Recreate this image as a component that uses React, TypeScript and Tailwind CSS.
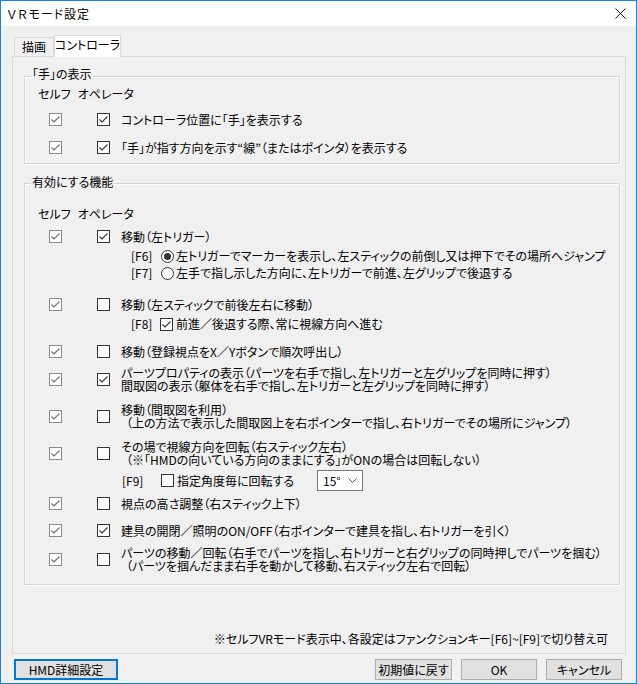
import React from 'react';

const Check: React.FC<{ checked?: boolean; dim?: boolean }> = ({ checked, dim }) => (
  <span
    className={
      'flex h-[13px] w-[13px] shrink-0 items-center justify-center border bg-white ' +
      (dim ? 'border-[#8c8c8c]' : 'border-[#333333]')
    }
  >
    {checked && (
      <svg width="11" height="11" viewBox="0 0 11 11">
        <polyline
          points="1.5,5.5 4,8 9.5,2.5"
          fill="none"
          stroke={dim ? '#6e6e6e' : '#333333'}
          strokeWidth="1.1"
        />
      </svg>
    )}
  </span>
);

const Radio: React.FC<{ on?: boolean }> = ({ on }) => (
  <span className="flex h-[13px] w-[13px] shrink-0 items-center justify-center rounded-full border border-[#333333] bg-white">
    {on && <span className="h-[7px] w-[7px] rounded-full bg-[#333333]" />}
  </span>
);

// one feature row: self + operator checkbox, then text (1 or 2 lines)
const Feature: React.FC<{ self: boolean; op: boolean; lines: string[]; className: string }> = ({
  self,
  op,
  lines,
  className,
}) => (
  <div className={'flex items-center ' + className}>
    <span className="ml-[24px]">
      <Check checked={self} dim />
    </span>
    <span className="ml-[35px]">
      <Check checked={op} />
    </span>
    <div className="ml-[11px] whitespace-nowrap leading-[13px]">
      {lines.map((l, i) => (
        <div key={i} className={l.startsWith('（') ? 'pl-[5px]' : ''}>
          {l}
        </div>
      ))}
    </div>
  </div>
);

const ColHeader: React.FC<{ className: string }> = ({ className }) => (
  <div className={'flex h-[16px] items-center pl-[13px] ' + className}>
    <span>セルフ</span>
    <span className="ml-[7px]">オペレータ</span>
  </div>
);

export default function App() {
  return (
    <div className="flex h-[684px] w-[637px] flex-col border border-[#1883d7] bg-[#f0f0f0] font-['Noto_Sans_CJK_JP','Noto_Sans',sans-serif] text-[12px] text-black [font-feature-settings:'palt']">
      {/* title bar */}
      <div className="flex h-[25px] shrink-0 items-center justify-between bg-white pl-[6px] pr-[10px]">
        <span className="tracking-[1px]">ＶＲモード設定</span>
        <svg width="11" height="11" viewBox="0 0 11 11">
          <path d="M0.5 0.5 L10.5 10.5 M10.5 0.5 L0.5 10.5" stroke="#111" strokeWidth="1" />
        </svg>
      </div>

      {/* tabs */}
      <div className="mt-[9px] flex items-start pl-[13px]">
        <div className="mt-[2px] flex h-[18px] w-[40px] items-center justify-center whitespace-nowrap border border-b-0 border-[#d9d9d9] bg-[#f0f0f0]">
          描画
        </div>
        <div className="relative z-10 -mb-[1px] flex h-[22px] w-[67px] items-center justify-center whitespace-nowrap border border-b-0 border-[#d9d9d9] bg-white pb-[3px]">
          コントローラ
        </div>
      </div>

      {/* panel */}
      <div className="ml-[11px] flex h-[598px] w-[614px] flex-col border border-[#d9d9d9] bg-[#f0f0f0] pl-[11px] pr-[5px] pt-[19px]">
        {/* group 1 */}
        <div className="w-[596px] border border-[#d5d5d5] pb-[8px] shadow-[inset_1px_1px_0_#ffffff,1px_1px_0_#ffffff]">
          <div className="-mt-[11px] ml-[6px] h-[16px] w-fit bg-[#f0f0f0] px-[1px] leading-[16px]">「手」の表示</div>
          <ColHeader className="mt-[4px]" />
          <Feature self op lines={['コントローラ位置に「手」を表示する']} className="mt-[9px] h-[16px]" />
          <Feature self op lines={['「手」が指す方向を示す“線”（またはポインタ）を表示する']} className="mt-[12px] h-[16px]" />
        </div>

        {/* group 2 */}
        <div className="mt-[19px] w-[596px] border border-[#d5d5d5] pb-[12px] shadow-[inset_1px_1px_0_#ffffff,1px_1px_0_#ffffff]">
          <div className="-mt-[10px] ml-[6px] h-[16px] w-fit bg-[#f0f0f0] px-[1px] leading-[16px]">有効にする機能</div>
          <ColHeader className="mt-[16px]" />

          <Feature self op lines={['移動（左トリガー）']} className="mt-[6px] h-[16px]" />
          <div className="mt-[4px] flex h-[16px] items-center whitespace-nowrap pl-[106px]">
            <span className="w-[30px]">[F6]</span>
            <Radio on />
            <span className="ml-[2px]">左トリガーでマーカーを表示し、左スティックの前倒し又は押下でその場所へジャンプ</span>
          </div>
          <div className="mt-[1px] flex h-[16px] items-center whitespace-nowrap pl-[106px]">
            <span className="w-[30px]">[F7]</span>
            <Radio />
            <span className="ml-[2px]">左手で指し示した方向に、左トリガーで前進、左グリップで後退する</span>
          </div>

          <Feature self op={false} lines={['移動（左スティックで前後左右に移動）']} className="mt-[15px] h-[16px]" />
          <div className="mt-[4px] flex h-[16px] items-center whitespace-nowrap pl-[106px]">
            <span className="w-[29px]">[F8]</span>
            <Check checked />
            <span className="ml-[3px]">前進／後退する際、常に視線方向へ進む</span>
          </div>

          <Feature self op={false} lines={['移動（登録視点をX／Yボタンで順次呼出し）']} className="mt-[11px] h-[16px]" />
          <Feature
            self
            op
            lines={[
              'パーツプロパティの表示（パーツを右手で指し、左トリガーと左グリップを同時に押す）',
              '間取図の表示（躯体を右手で指し、左トリガーと左グリップを同時に押す）',
            ]}
            className="mt-[7px] h-[26px]"
          />
          <Feature
            self
            op={false}
            lines={['移動（間取図を利用）', '（上の方法で表示した間取図上を右ポインターで指し、右トリガーでその場所にジャンプ）']}
            className="mt-[11px] h-[26px]"
          />
          <Feature
            self
            op={false}
            lines={['その場で視線方向を回転（右スティック左右）', '（※「HMDの向いている方向のままにする」がONの場合は回転しない）']}
            className="mt-[11px] h-[26px]"
          />
          <div className="mt-[4px] flex h-[21px] items-center whitespace-nowrap pl-[97px]">
            <span className="w-[39px]">[F9]</span>
            <Check />
            <span className="ml-[3px] w-[140px]">指定角度毎に回転する</span>
            <div className="flex h-[21px] w-[46px] items-center justify-between border border-[#7a7a7a] bg-white pl-[5px] pr-[5px]">
              <span>15°</span>
              <svg width="9" height="6" viewBox="0 0 9 6">
                <polyline points="0.5,0.5 4.5,4.5 8.5,0.5" fill="none" stroke="#555" strokeWidth="1" />
              </svg>
            </div>
          </div>
          <Feature self op={false} lines={['視点の高さ調整（右スティック上下）']} className="mt-[4px] h-[16px]" />
          <Feature self op lines={['建具の開閉／照明のON/OFF（右ポインターで建具を指し、右トリガーを引く）']} className="mt-[11px] h-[16px]" />
          <Feature
            self
            op={false}
            lines={[
              'パーツの移動／回転（右手でパーツを指し、右トリガーと右グリップの同時押しでパーツを掴む）',
              '（パーツを掴んだまま右手を動かして移動、右スティック左右で回転）',
            ]}
            className="mt-[8px] h-[26px]"
          />
        </div>

        <div className="flex-1" />
        <div className="mb-[6px] flex h-[16px] items-center justify-end whitespace-nowrap pr-[12px]">
          ※セルフVRモード表示中、各設定はファンクションキー[F6]~[F9]で切り替え可
        </div>
      </div>

      {/* buttons */}
      <div className="mt-[5px] flex items-center pl-[13px] pr-[14px]">
        <button className="flex h-[21px] w-[104px] items-center justify-center whitespace-nowrap border-2 border-[#0078d7] bg-[#e1e1e1]">
          HMD詳細設定
        </button>
        <div className="flex-1" />
        <div className="flex gap-[9px]">
          <button className="flex h-[21px] w-[77px] items-center justify-center whitespace-nowrap border border-[#adadad] bg-[#e1e1e1]">
            初期値に戻す
          </button>
          <button className="flex h-[21px] w-[76px] items-center justify-center border border-[#adadad] bg-[#e1e1e1]">
            OK
          </button>
          <button className="flex h-[21px] w-[76px] items-center justify-center whitespace-nowrap border border-[#adadad] bg-[#e1e1e1]">
            キャンセル
          </button>
        </div>
      </div>
    </div>
  );
}
